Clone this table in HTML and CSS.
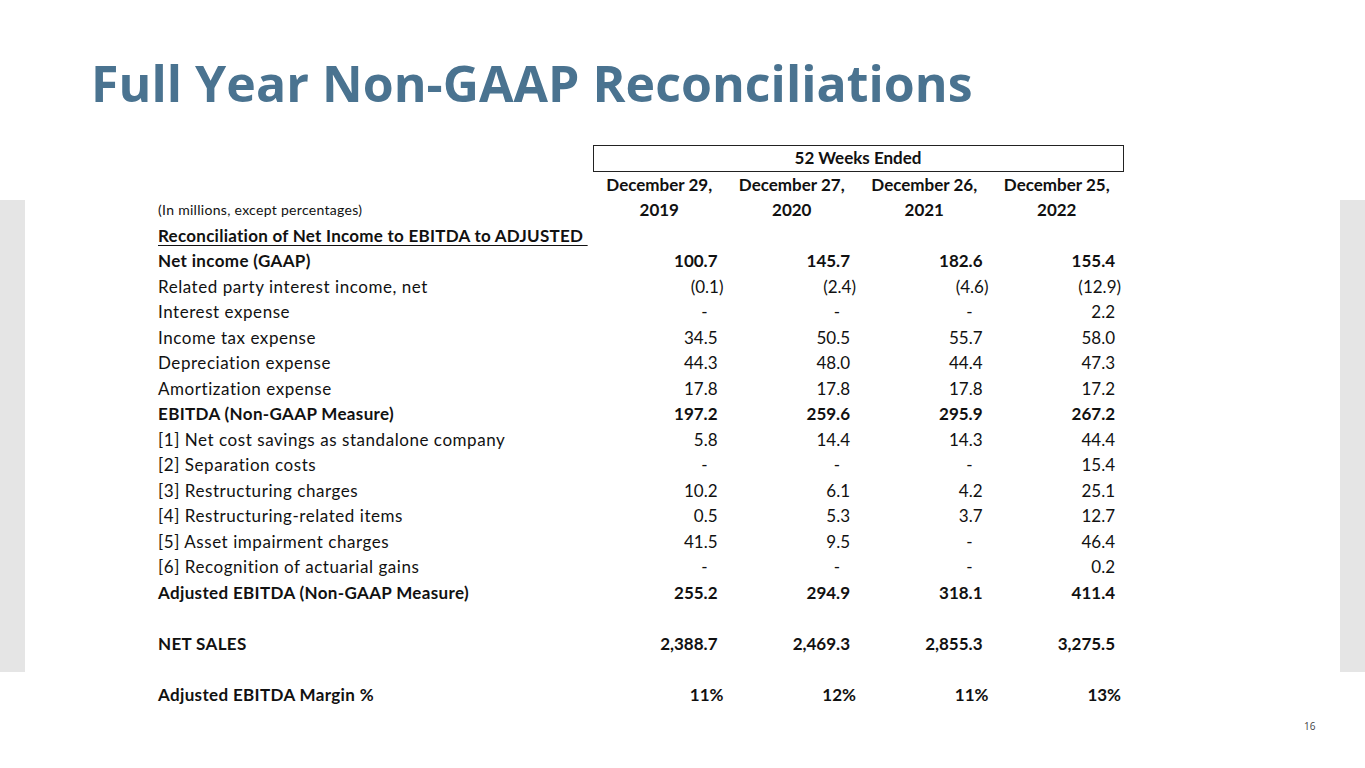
FILE: index.html
```html
<!DOCTYPE html>
<html>
<head>
<meta charset="utf-8">
<link rel="stylesheet" href="styles.css">
</head>
<body>
<div class="slide">
  <h1 class="title">Full Year Non-GAAP Reconciliations</h1>
  <div class="main">
    <div class="sidebar"></div>
    <div class="content">
      <table class="recon">
        <colgroup>
          <col class="c-label"><col class="c-val"><col class="c-val"><col class="c-val"><col class="c-val">
        </colgroup>
        <tr class="r-box"><td></td><td colspan="4" class="boxed">52 Weeks Ended</td></tr>
        <tr class="r-head"><td></td><td>December 29,</td><td>December 27,</td><td>December 26,</td><td>December 25,</td></tr>
        <tr class="r-head"><td class="units">(In millions, except percentages)</td><td>2019</td><td>2020</td><td>2021</td><td>2022</td></tr>
        <tr><td class="section"><span>Reconciliation of Net Income to EBITDA to ADJUSTED&nbsp;</span></td><td></td><td></td><td></td><td></td></tr>
        <tr class="b"><td>Net income (GAAP)</td><td>100.7</td><td>145.7</td><td>182.6</td><td>155.4</td></tr>
        <tr><td>Related party interest income, net</td><td><span class="neg">(0.1)</span></td><td><span class="neg">(2.4)</span></td><td><span class="neg">(4.6)</span></td><td><span class="neg">(12.9)</span></td></tr>
        <tr><td>Interest expense</td><td><span class="dash">-</span></td><td><span class="dash">-</span></td><td><span class="dash">-</span></td><td>2.2</td></tr>
        <tr><td>Income tax expense</td><td>34.5</td><td>50.5</td><td>55.7</td><td>58.0</td></tr>
        <tr><td>Depreciation expense</td><td>44.3</td><td>48.0</td><td>44.4</td><td>47.3</td></tr>
        <tr><td>Amortization expense</td><td>17.8</td><td>17.8</td><td>17.8</td><td>17.2</td></tr>
        <tr class="b"><td>EBITDA (Non-GAAP Measure)</td><td>197.2</td><td>259.6</td><td>295.9</td><td>267.2</td></tr>
        <tr><td>[1] Net cost savings as standalone company</td><td>5.8</td><td>14.4</td><td>14.3</td><td>44.4</td></tr>
        <tr><td>[2] Separation costs</td><td><span class="dash">-</span></td><td><span class="dash">-</span></td><td><span class="dash">-</span></td><td>15.4</td></tr>
        <tr><td>[3] Restructuring charges</td><td>10.2</td><td>6.1</td><td>4.2</td><td>25.1</td></tr>
        <tr><td>[4] Restructuring-related items</td><td>0.5</td><td>5.3</td><td>3.7</td><td>12.7</td></tr>
        <tr><td>[5] Asset impairment charges</td><td>41.5</td><td>9.5</td><td><span class="dash">-</span></td><td>46.4</td></tr>
        <tr><td>[6] Recognition of actuarial gains</td><td><span class="dash">-</span></td><td><span class="dash">-</span></td><td><span class="dash">-</span></td><td>0.2</td></tr>
        <tr class="b"><td>Adjusted EBITDA (Non-GAAP Measure)</td><td>255.2</td><td>294.9</td><td>318.1</td><td>411.4</td></tr>
        <tr class="blank"><td></td><td></td><td></td><td></td><td></td></tr>
        <tr class="b"><td>NET SALES</td><td>2,388.7</td><td>2,469.3</td><td>2,855.3</td><td>3,275.5</td></tr>
        <tr class="blank"><td></td><td></td><td></td><td></td><td></td></tr>
        <tr class="b"><td>Adjusted EBITDA Margin %</td><td><span class="pct">11%</span></td><td><span class="pct">12%</span></td><td><span class="pct">11%</span></td><td><span class="pct">13%</span></td></tr>
      </table>
    </div>
    <div class="sidebar"></div>
  </div>
  <div class="pagenum">16</div>
</div>
</body>
</html>
```
FILE: styles.css
```css
* { box-sizing: border-box; }
html, body { margin: 0; padding: 0; background: #ffffff; }
.slide {
  width: 1365px;
  height: 768px;
  background: #ffffff;
  display: flex;
  flex-direction: column;
  overflow: hidden;
}
.title {
  margin: 0;
  padding: 53px 0 0 91px;
  height: 145px;
  font-family: "Open Sans", sans-serif;
  font-weight: 700;
  font-size: 50px;
  line-height: 60px;
  color: #4a7390;
  letter-spacing: 0.05px;
}
.main {
  display: flex;
  flex-direction: row;
  align-items: flex-start;
  height: 580px;
}
.sidebar {
  width: 25px;
  height: 472px;
  margin-top: 55px;
  background: #e5e5e5;
  flex: none;
}
.content {
  flex: 1;
  padding-left: 133px;
}
.recon {
  border-collapse: collapse;
  table-layout: fixed;
  width: 965px;
  font-family: "Lato", sans-serif;
  font-size: 17px;
  color: #111111;
}
.c-label { width: 435px; }
.c-val { width: 132.5px; }
.recon td {
  height: 25.5px;
  padding: 0 8px 0 0;
  text-align: right;
  white-space: nowrap;
  line-height: 25.5px;
  vertical-align: middle;
}
.recon td:first-child {
  text-align: left;
  padding: 0;
  letter-spacing: 0.55px;
  font-variant-ligatures: none;
}
.b td:first-child { font-weight: 700; letter-spacing: 0.35px; }
.r-box td.boxed {
  border: 1.5px solid #222;
  text-align: center;
  font-weight: 700;
  padding: 0;
  height: 24px;
  line-height: 22px;
}
.r-head td { text-align: center; font-weight: 700; padding: 0; }
.r-head td.units {
  font-weight: 400;
  font-size: 14px;
  letter-spacing: 0.3px;
  text-align: left;
}
.recon td.section { letter-spacing: 0.26px; }
.section span { font-weight: 700; text-decoration: underline; text-underline-offset: 3px; }
.b td { font-weight: 700; }
.neg { margin-right: -6px; }
.dash { padding-right: 10px; }
.pct { margin-right: -6px; }
.blank td { height: 25.5px; }
.pagenum {
  padding: 0 0 0 1304px;
  font-family: "Open Sans", sans-serif;
  font-size: 10px;
  color: #444;
  margin-top: -6px;
}
```
